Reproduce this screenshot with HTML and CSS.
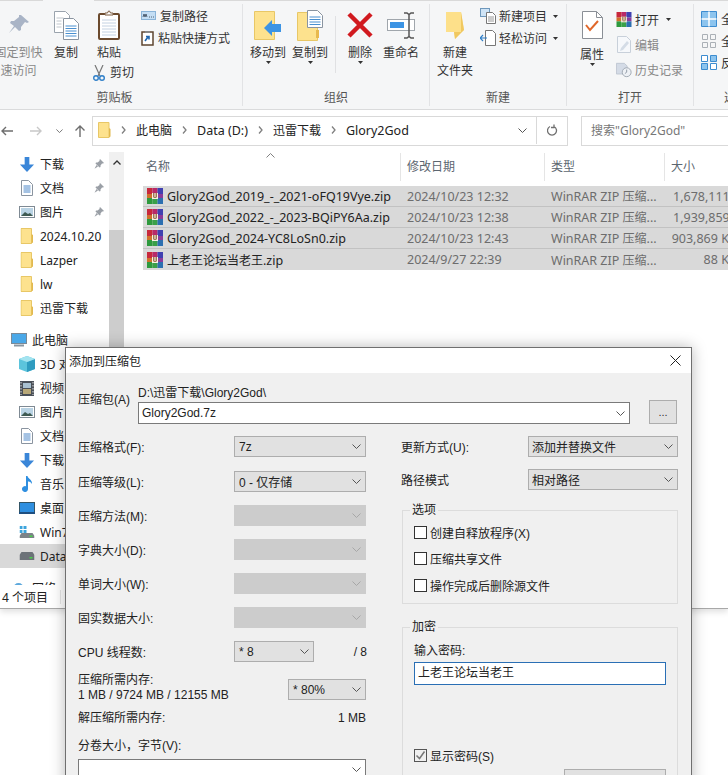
FILE: index.html
```html
<!DOCTYPE html>
<html lang="zh-CN">
<head>
  <meta charset="UTF-8" />
  <title>添加到压缩包</title>
  <link rel="stylesheet" href="styles.css">
</head>
<body>

  <svg class="icon-defs" xmlns="http://www.w3.org/2000/svg">
    <symbol id="rar" viewBox="0 0 16 16">
      <rect x="0" y="0" width="5.500" height="6" fill="#c8283c"/><rect x="5.500" y="0" width="5" height="6" fill="#b82a68"/><rect x="10.500" y="0" width="5.500" height="6" fill="#4040b0"/>
      <rect x="0" y="6" width="5.500" height="4" fill="#d0702a"/><rect x="10.500" y="6" width="5.500" height="4" fill="#8a3a9a"/>
      <rect x="0" y="10" width="5.500" height="6" fill="#2e9a3e"/><rect x="5.500" y="10" width="5" height="6" fill="#3aa048"/><rect x="10.500" y="10" width="5.500" height="6" fill="#2c6fb0"/>
      <rect x="5" y="5" width="6" height="6" fill="#f6f1e4"/><path d="M6.500 5v4M8 5v4M9.500 5v4M6.500 9.500h3" fill="none" stroke="#8a5a30" stroke-width=".8"/>
    </symbol>
    <symbol id="folder" viewBox="0 0 13 16">
      <path d="M.5.500h10.500v15H.5z" fill="#fde28e" stroke="#e8c766"/><path d="M11 6l1.500 1v7.500l-1.500 1z" fill="#e2b94f"/>
    </symbol>
    <symbol id="down" viewBox="0 0 16 16">
      <path d="M5.500 0h5v8h5L8 16 .5 8h5z" fill="#3a86d8"/>
    </symbol>
    <symbol id="doc" viewBox="0 0 12 16">
      <path d="M.5.500h7l4 4v11H.5z" fill="#fff" stroke="#8a94a0"/><path d="M2.500 6h7M2.500 8h7M2.500 10h7M2.500 12h7" stroke="#4a86c8"/>
    </symbol>
    <symbol id="pic" viewBox="0 0 16 12">
      <rect x=".5" y=".5" width="15" height="11" fill="#fff" stroke="#7f8a94"/><rect x="2" y="2" width="12" height="8" fill="#b9d3e4"/><path d="M2 10l4-4 3 2 2-1 3 3z" fill="#3f5a52"/>
    </symbol>
    <symbol id="pin" viewBox="0 0 10 10">
      <path d="M6 0l4 4-1 .5-1 0-1.500 2 0 1.500-1 .5-4-4 .5-1 1.500 0 2-1.500 0-1zM2.500 6l1.500 1.500L.5 9.800z" fill="#9a9fa6"/>
    </symbol>
    <symbol id="chev" viewBox="0 0 9 5">
      <path d="M.5.500L4.500 4.500 8.500.500" fill="none" stroke="#555" stroke-width="1"/>
    </symbol>
    <symbol id="crumb" viewBox="0 0 5 8">
      <path d="M1 .5L4 4 1 7.500" fill="none" stroke="#808080" stroke-width="1.300"/>
    </symbol>
  </svg>

  <div class="explorer">
    <div class="tabline"><span class="tabgap"></span></div>

    <div class="ribbon">
      <section class="group group-clip">
        <div class="tools">
          <div class="big big-pin">
            <div class="big-icon"><svg width="22" height="20" viewBox="0 0 22 20"><path d="M13 0l8 7-2 1-2-1-4 5 0 3-2 1-4-4-6 6 5-7-4-3 1-2 3 0 5-4 0-2z" fill="#a9b4c6"/></svg></div>
            <span class="muted">固定到快<br>速访问</span>
          </div>
          <div class="big big-copy">
            <div class="big-icon"><svg width="25" height="29" viewBox="0 0 25 29"><path d="M.5.500h11l4 4v17H.5z" fill="#fff" stroke="#9aa3ad"/><path d="M9.500 7.500h10l5 5v16h-15z" fill="#fff" stroke="#8a94a0"/><path d="M11.500 15h11M11.500 17.500h11M11.500 20h11M11.500 22.500h11M11.500 25h11" stroke="#4a90d0"/><path d="M2.500 7h7M2.500 10h5M2.500 13h5M2.500 16h5" stroke="#c0c6cc"/></svg></div>
            <span>复制</span>
          </div>
          <div class="paste">
            <div class="big-icon"><svg width="22" height="30" viewBox="0 0 22 30"><rect x="1" y="4" width="20" height="25" rx="1" fill="#fff" stroke="#6b4a2e" stroke-width="2"/><path d="M7 5V3h2.500l1-2h1l1 2H15v2z" fill="#fff" stroke="#7a5a3e"/><path d="M4 10h14M4 13h14M4 16h14M4 19h14M4 22h14M4 25h14" stroke="#c4d2e2"/></svg></div>
            <span>粘贴</span>
            <div class="cut">
              <svg width="12" height="16" viewBox="0 0 12 16"><path d="M2 0l5 11M10 0L5 11" stroke="#777" stroke-width="1.200" fill="none"/><circle cx="3" cy="13" r="2.300" fill="none" stroke="#2f7fc8" stroke-width="1.400"/><circle cx="9" cy="13" r="2.300" fill="none" stroke="#2f7fc8" stroke-width="1.400"/></svg>
              <span>剪切</span>
            </div>
          </div>
          <div class="smalls">
            <div class="small"><svg width="15" height="10" viewBox="0 0 15 10"><rect x=".5" y=".5" width="14" height="8" fill="#c4def4" stroke="#8ab4d8"/><path d="M2 6l1-3 1 3 1-3 1 3M8 6h1M10 6h1M12 6h1" stroke="#345" fill="none" stroke-width=".8"/></svg><span>复制路径</span></div>
            <div class="small"><svg width="13" height="16" viewBox="0 0 13 16"><rect x="1" y="2" width="11" height="13" fill="#fff" stroke="#5e4630" stroke-width="1.500"/><rect x="4" y="1" width="5" height="2" fill="#888"/><path d="M4 11l3-4M5 6.500h3v3" stroke="#1f66b0" stroke-width="1.600" fill="none"/></svg><span>粘贴快捷方式</span></div>
          </div>
        </div>
        <div class="group-name">剪贴板</div>
      </section>

      <section class="group group-org">
        <div class="tools">
          <div class="big big-move">
            <div class="big-icon"><svg width="28" height="29" viewBox="0 0 28 29"><path d="M.5.500h20v28H.5z" fill="#fde28e" stroke="#e8c766"/><path d="M10 20l8-8v4h9v8h-9v4z" transform="translate(0 -3)" fill="#3c94e4"/></svg></div>
            <span>移动到</span><svg class="caret" width="5" height="3" viewBox="0 0 5 3"><path d="M0 0h5L2.500 3z"/></svg>
          </div>
          <div class="big big-move">
            <div class="big-icon"><svg width="27" height="31" viewBox="0 0 27 31"><path d="M.5 2.500h20v28H.5z" fill="#fde28e" stroke="#e8c766"/><path d="M19 28V20h3v8z" fill="#e8b94e"/><path d="M10.500.500h10l5 5v12h-15z" fill="#fff" stroke="#8a94a0"/><path d="M12.500 7h11M12.500 9.500h11M12.500 12h11M12.500 14.500h11" stroke="#4a90d0"/></svg></div>
            <span>复制到</span><svg class="caret" width="5" height="3" viewBox="0 0 5 3"><path d="M0 0h5L2.500 3z"/></svg>
          </div>
          <i class="tool-sep"></i>
          <div class="big big-del">
            <div class="big-icon"><svg width="26" height="26" viewBox="0 0 26 26"><path d="M2 2l22 22M24 2L2 24" stroke="#d11a1f" stroke-width="4.500"/></svg></div>
            <span>删除</span><svg class="caret" width="5" height="3" viewBox="0 0 5 3"><path d="M0 0h5L2.500 3z"/></svg>
          </div>
          <div class="big big-ren">
            <div class="big-icon"><svg width="29" height="27" viewBox="0 0 29 27"><rect x=".5" y="7.500" width="27" height="11" fill="#fff" stroke="#a0a6ac"/><rect x="3" y="10" width="14" height="6" fill="#3c94e4"/><path d="M17 1h3l2 1.500L24 1h3M22 2.500v22M17 26h3l2-1.500L24 26h3" fill="none" stroke="#555" stroke-width="1.500"/></svg></div>
            <span>重命名</span>
          </div>
        </div>
        <div class="group-name">组织</div>
      </section>

      <section class="group group-new">
        <div class="tools">
          <div class="big big-nf">
            <div class="big-icon"><svg width="20" height="28" viewBox="0 0 20 28"><path d="M1 1h15l3 18-3 2-6 7-1-7H1z" fill="#fde08a"/><path d="M16 1l3 18-9 9-1-7h7z" fill="#f0c860"/></svg></div>
            <span>新建<br>文件夹</span>
          </div>
          <div class="smalls">
            <div class="small"><svg width="17" height="16" viewBox="0 0 17 16"><rect x=".5" y=".5" width="9" height="8" fill="#cfe4f6" stroke="#6e98bc"/><path d="M6.500 4.500h6l3 3v8h-9z" fill="#fff" stroke="#777"/><path d="M8 9h6M8 11h6M8 13h6" stroke="#999"/></svg><span>新建项目</span><svg class="caret" width="5" height="3" viewBox="0 0 5 3"><path d="M0 0h5L2.500 3z"/></svg></div>
            <div class="small"><svg width="17" height="16" viewBox="0 0 17 16"><path d="M5.500.500h7l3 3v12h-10z" fill="#fff" stroke="#777"/><path d="M0 8h7M3 5L0 8l3 3" fill="none" stroke="#2f7fc8" stroke-width="1.200"/></svg><span>轻松访问</span><svg class="caret" width="5" height="3" viewBox="0 0 5 3"><path d="M0 0h5L2.500 3z"/></svg></div>
          </div>
        </div>
        <div class="group-name">新建</div>
      </section>

      <section class="group group-open">
        <div class="tools">
          <div class="big big-prop">
            <div class="big-icon"><svg width="21" height="28" viewBox="0 0 21 28"><path d="M.5.500h14l6 6v21H.5z" fill="#fff" stroke="#8a8f96"/><path d="M14.500.500v6h6" fill="none" stroke="#8a8f96"/><path d="M4 14l4 5 8-9" fill="none" stroke="#e0672a" stroke-width="2"/></svg></div>
            <span>属性</span><svg class="caret" width="5" height="3" viewBox="0 0 5 3"><path d="M0 0h5L2.500 3z"/></svg>
          </div>
          <div class="smalls smalls-open">
            <div class="small"><svg width="16" height="15"><use href="#rar"/></svg><span>打开</span><svg class="caret" width="5" height="3" viewBox="0 0 5 3"><path d="M0 0h5L2.500 3z"/></svg></div>
            <div class="small muted"><svg width="16" height="17" viewBox="0 0 14 17"><path d="M.5.500h9l4 4v12H.5z" fill="#f6f8fb" stroke="#c8d0da"/><path d="M4 12l6-7 2 2-6 7-3 1z" fill="#d4dce6"/></svg><span>编辑</span></div>
            <div class="small muted"><svg width="16" height="16" viewBox="0 0 18 16"><path d="M.5.500h9l3 3v9H.5z" fill="#d4dbe6" stroke="#bcc4d0"/><circle cx="12" cy="10.500" r="5" fill="#eef1f5" stroke="#9aa3ad"/><path d="M12 7.500v3l-2 1.500" fill="none" stroke="#8a94a0"/></svg><span>历史记录</span></div>
          </div>
        </div>
        <div class="group-name">打开</div>
      </section>

      <section class="group group-sel">
        <div class="tools">
          <div class="smalls smalls-sel">
            <div class="small"><svg width="16" height="16" viewBox="0 0 16 16"><path d="M.5.500h15v15H.5z" fill="#8cc4ee" stroke="#3c8cd0"/><path d="M8 .5v15M.5 8h15" stroke="#fff" stroke-width="1.500"/></svg><span>全部选择</span></div>
            <div class="small"><svg width="16" height="14" viewBox="0 0 14 14"><path d="M.5.500h5v5h-5zM8.500.500h5v5h-5zM.5 8.500h5v5h-5zM8.500 8.500h5v5h-5z" fill="none" stroke="#aab0b6"/></svg><span>全部取消</span></div>
            <div class="small"><svg width="16" height="16" viewBox="0 0 16 16"><path d="M.5 8.500h6v6h-6zM9.500.500h6v6h-6z" fill="#8cc4ee" stroke="#3c8cd0"/><path d="M.5.500h6v6h-6zM9.500 8.500h6v6h-6z" fill="#fff" stroke="#3c8cd0"/></svg><span>反向选择</span></div>
          </div>
        </div>
        <div class="group-name">选择</div>
      </section>
    </div>

    <div class="nav">
      <svg class="nav-back" width="12" height="10" viewBox="0 0 12 10"><path d="M12 5H1M5 1L1 5l4 4" fill="none" stroke="#6e6e6e" stroke-width="1.400"/></svg>
      <svg class="nav-fwd" width="12" height="10" viewBox="0 0 12 10"><path d="M0 5h11M7 1l4 4-4 4" fill="none" stroke="#c8c8c8" stroke-width="1.400"/></svg>
      <svg class="nav-more" width="7" height="4"><use href="#chev"/></svg>
      <svg class="nav-up" width="12" height="12" viewBox="0 0 12 12"><path d="M6 12V1M1.500 5.500L6 1l4.500 4.500" fill="none" stroke="#6e6e6e" stroke-width="1.400"/></svg>
      <div class="address">
        <svg width="13" height="16"><use href="#folder"/></svg>
        <svg class="crumb" width="5" height="8"><use href="#crumb"/></svg><span class="cn">此电脑</span>
        <svg class="crumb" width="5" height="8"><use href="#crumb"/></svg><span>Data (D:)</span>
        <svg class="crumb" width="5" height="8"><use href="#crumb"/></svg><span class="cn">迅雷下载</span>
        <svg class="crumb" width="5" height="8"><use href="#crumb"/></svg><span>Glory2God</span>
        <svg class="addr-chev" width="9" height="5"><use href="#chev"/></svg>
        <div class="refresh"><svg width="11" height="12" viewBox="0 0 11 12"><path d="M3 2.500a4.500 4.500 0 1 0 4 0M7 .5v3h-3" fill="none" stroke="#707070" stroke-width="1.300"/></svg></div>
      </div>
      <div class="search">搜索"Glory2God"</div>
    </div>

    <div class="main">
      <aside class="sidebar">
        <div class="side-item"><svg width="15" height="15"><use href="#down"/></svg><span>下载</span><svg class="side-pin" width="10" height="10"><use href="#pin"/></svg></div>
        <div class="side-item"><svg width="12" height="16"><use href="#doc"/></svg><span>文档</span><svg class="side-pin" width="10" height="10"><use href="#pin"/></svg></div>
        <div class="side-item"><svg width="16" height="12"><use href="#pic"/></svg><span>图片</span><svg class="side-pin" width="10" height="10"><use href="#pin"/></svg></div>
        <div class="side-item"><svg width="13" height="16"><use href="#folder"/></svg><span>2024.10.20</span></div>
        <div class="side-item"><svg width="13" height="16"><use href="#folder"/></svg><span>Lazper</span></div>
        <div class="side-item"><svg width="13" height="16"><use href="#folder"/></svg><span>lw</span></div>
        <div class="side-item"><svg width="13" height="16"><use href="#folder"/></svg><span>迅雷下载</span></div>
        <div class="side-item side-pc"><svg width="16" height="14" viewBox="0 0 16 14"><rect x=".5" y=".5" width="15" height="10" fill="#4aa8e8" stroke="#7a8a98"/><path d="M3 12.500h10" stroke="#8a96a0" stroke-width="2"/></svg><span>此电脑</span></div>
        <div class="side-item"><svg width="16" height="16" viewBox="0 0 16 16"><path d="M8 0l8 3v10l-8 3-8-3V3z" fill="#5cc4dc"/><path d="M8 6l8-3v10l-8 3z" fill="#2f9cc0"/><path d="M8 6L0 3l8-3 8 3z" fill="#a4e4f0"/></svg><span>3D 对象</span></div>
        <div class="side-item"><svg width="14" height="15" viewBox="0 0 14 15"><rect width="14" height="15" fill="#4a5058"/><rect x="3" y="2" width="8" height="5" fill="#a8c0d0"/><rect x="3" y="8" width="8" height="5" fill="#b8a878"/><path d="M1 1v13M13 1v13" stroke="#ddd" stroke-dasharray="1.500 1.500"/></svg><span>视频</span></div>
        <div class="side-item"><svg width="16" height="12"><use href="#pic"/></svg><span>图片</span></div>
        <div class="side-item"><svg width="12" height="16"><use href="#doc"/></svg><span>文档</span></div>
        <div class="side-item"><svg width="15" height="15"><use href="#down"/></svg><span>下载</span></div>
        <div class="side-item"><svg width="12" height="16" viewBox="0 0 12 16"><path d="M5 0h1.500c.5 3 5 3.500 4.500 8-1-2-3-2.500-4-2.500V13a3 3 0 1 1-2-2.800z" fill="#2f8fe0"/></svg><span>音乐</span></div>
        <div class="side-item"><svg width="16" height="12" viewBox="0 0 16 12"><rect x=".5" y=".5" width="15" height="11" fill="#2f8fe0" stroke="#356"/><rect y="10" width="16" height="2" fill="#1f4f80"/></svg><span>桌面</span></div>
        <div class="side-item"><svg width="15" height="12" viewBox="0 0 15 12"><path d="M0 0h3v3H0zM4 0h3v3H4zM0 4h3v3H0zM4 4h3v3H4z" fill="#3ca4dc"/><path d="M2 7h11l2 3v2H0v-2z" fill="#7c8288"/><rect x="10" y="9.500" width="3" height="1.500" fill="#4ad04a"/></svg><span>Win7</span></div>
        <div class="side-item side-sel"><svg width="15" height="8" viewBox="0 0 15 8"><path d="M2 0h11l2 3v5H0V3z" fill="#6c7278"/><rect x="10" y="5" width="3" height="1.500" fill="#4ad04a"/></svg><span>Data (D:)</span></div>
        <div class="side-item side-net"><svg width="15" height="12" viewBox="0 0 15 12"><circle cx="7" cy="6" r="5" fill="#5ca8dc"/></svg><span>网络</span></div>
      </aside>
      <div class="scrollbar">
        <div class="scroll-up"><svg width="8" height="5" viewBox="0 0 8 5"><path d="M.5 4.500L4 1l3.500 3.500" fill="none" stroke="#333" stroke-width="1.300"/></svg></div>
        <div class="scroll-thumb"></div>
      </div>
      <div class="files">
        <div class="file-head">
          <div class="col-name">名称<svg class="sort" width="9" height="5" viewBox="0 0 9 5"><path d="M.5 4.500l4-4 4 4" fill="none" stroke="#808080"/></svg></div>
          <div>修改日期</div>
          <div>类型</div>
          <div>大小</div>
        </div>
        <div class="file-row">
          <div class="file-name"><svg width="16" height="16"><use href="#rar"/></svg>Glory2God_2019_-_2021-oFQ19Vye.zip</div>
          <div>2024/10/23 12:32</div><div>WinRAR ZIP <span class="cn">压缩</span>...</div><div class="file-size size-big">1,678,111 KB</div>
        </div>
        <div class="file-row">
          <div class="file-name"><svg width="16" height="16"><use href="#rar"/></svg>Glory2God_2022_-_2023-BQiPY6Aa.zip</div>
          <div>2024/10/23 12:38</div><div>WinRAR ZIP <span class="cn">压缩</span>...</div><div class="file-size size-big">1,939,859 KB</div>
        </div>
        <div class="file-row">
          <div class="file-name"><svg width="16" height="16"><use href="#rar"/></svg>Glory2God_2024-YC8LoSn0.zip</div>
          <div>2024/10/23 12:43</div><div>WinRAR ZIP <span class="cn">压缩</span>...</div><div class="file-size">903,869 KB</div>
        </div>
        <div class="file-row">
          <div class="file-name"><svg width="16" height="16"><use href="#rar"/></svg><span><span class="cn">上老王论坛当老王</span>.zip</span></div>
          <div>2024/9/27 22:39</div><div>WinRAR ZIP <span class="cn">压缩</span>...</div><div class="file-size">88 KB</div>
        </div>
      </div>
    </div>

    <div class="status"><span>4 个项目</span><i></i></div>
  </div>

  <!-- dialog window floats over the explorer -->
  <div class="dialog">
    <div class="dlg-title">
      <span>添加到压缩包</span>
      <svg width="11" height="11" viewBox="0 0 11 11"><path d="M.5.500l10 10M10.500.500l-10 10" stroke="#222"/></svg>
    </div>
    <div class="dlg-body">
      <div class="archive">
        <label class="archive-label">压缩包(A)</label>
        <div class="archive-field">
          <div class="archive-path">D:\迅雷下载\Glory2God\</div>
          <div class="combo combo-edit combo-archive">Glory2God.7z<svg width="9" height="5"><use href="#chev"/></svg></div>
        </div>
        <button class="browse">...</button>
      </div>

      <div class="columns">
        <div class="col-left">
          <div class="row row-first"><span>压缩格式(F):</span><div class="combo">7z<svg width="9" height="5"><use href="#chev"/></svg></div></div>
          <div class="row"><span>压缩等级(L):</span><div class="combo">0 - 仅存储<svg width="9" height="5"><use href="#chev"/></svg></div></div>
          <div class="row"><span>压缩方法(M):</span><div class="combo combo-off"><svg width="9" height="5"><use href="#chev"/></svg></div></div>
          <div class="row"><span>字典大小(D):</span><div class="combo combo-off"><svg width="9" height="5"><use href="#chev"/></svg></div></div>
          <div class="row"><span>单词大小(W):</span><div class="combo combo-off"><svg width="9" height="5"><use href="#chev"/></svg></div></div>
          <div class="row"><span>固实数据大小:</span><div class="combo combo-off"><svg width="9" height="5"><use href="#chev"/></svg></div></div>
          <div class="row">
            <span>CPU 线程数:</span>
            <div class="cpu"><div class="combo combo-cpu">* 8<svg width="9" height="5"><use href="#chev"/></svg></div><span class="cpu-max">/ 8</span></div>
          </div>
          <div class="row-mem">
            <div class="mem-text"><div>压缩所需内存:</div><div>1 MB / 9724 MB / 12155 MB</div></div>
            <div class="combo combo-mem">* 80%<svg width="9" height="5"><use href="#chev"/></svg></div>
          </div>
          <div class="row-text"><span>解压缩所需内存:</span><span>1 MB</span></div>
          <div class="row-text row-vol">分卷大小，字节(V):</div>
          <div class="combo combo-edit combo-vol"><svg width="9" height="5"><use href="#chev"/></svg></div>
        </div>

        <div class="col-right">
          <div class="row row-right"><span>更新方式(U):</span><div class="combo combo-wide">添加并替换文件<svg width="9" height="5"><use href="#chev"/></svg></div></div>
          <div class="row row-right"><span>路径模式</span><div class="combo combo-wide">相对路径<svg width="9" height="5"><use href="#chev"/></svg></div></div>
          <fieldset class="box box-opts">
            <legend>选项</legend>
            <div class="check-row"><i class="check"></i>创建自释放程序(X)</div>
            <div class="check-row"><i class="check"></i>压缩共享文件</div>
            <div class="check-row"><i class="check"></i>操作完成后删除源文件</div>
          </fieldset>
          <fieldset class="box box-pass">
            <legend>加密</legend>
            <div class="pass-label">输入密码:</div>
            <div class="pass-input">上老王论坛当老王</div>
            <div class="check-row check-show">
              <i class="check check-on"><svg width="11" height="11" viewBox="0 0 11 11"><path d="M1.500 5.500l3 3 5-7" fill="none" stroke="#777" stroke-width="1.500"/></svg></i>显示密码(S)
            </div>
            <div class="pass-actions"><button class="pass-btn"></button></div>
          </fieldset>
        </div>
      </div>
    </div>
  </div>

</body>
</html>
```

FILE: styles.css
```css
* {
  box-sizing: border-box;
}

html, body {
  height: 775px;
  overflow: hidden;
}

body {
  margin: 0;
  position: relative;
  background: #fff;
  color: #222;
  font-family: "Noto Sans", "Noto Sans CJK SC", sans-serif;
  font-size: 12px;
}

.icon-defs {
  display: none;
}

svg {
  flex: none;
  display: block;
}

.cn {
  font-size: 12px;
}

/* explorer window */
.explorer {
  height: 609px;
  border-bottom: 1px solid #a8a8a8;
  box-shadow: 0 3px 6px rgba(0, 0, 0, 0.12);
  overflow: hidden;
}

.tabline {
  height: 4px;
  background: #f5f6f7;
  border-top: 1px solid #d9d9d9;
}

.tabgap {
  display: block;
  width: 51px;
  height: 3px;
  margin: -1px 0 0 43px;
  background: #f5f6f7;
}

.ribbon {
  display: flex;
  height: 106px;
  background: #f5f6f7;
  border-bottom: 1px solid #dadbdc;
  color: #333;
}

.group {
  flex: none;
  position: relative;
  display: flex;
  flex-direction: column;
  border-right: 1px solid #e2e3e5;
  margin-bottom: 3px;
}

.group-clip { width: 250px; margin-left: -7px; }
.group-org { width: 187px; }
.group-new { width: 137px; }
.group-open { width: 127px; }
.group-sel { width: 84px; border-right: none; }

.tools {
  flex: 1;
  display: flex;
  padding-top: 1px;
}

.group-name {
  height: 18px;
  line-height: 16px;
  margin-bottom: -2px;
  text-align: center;
  color: #555;
}

.group-clip .group-name {
  padding-right: 6px;
}

.big {
  display: flex;
  flex-direction: column;
  align-items: center;
  text-align: center;
  line-height: 18px;
}

.big-icon {
  height: 40px;
  display: flex;
  align-items: center;
  justify-content: center;
  margin-bottom: -1px;
}

.caret {
  margin-top: -1px;
  fill: #333;
}

.muted {
  color: #888;
}

.big-pin { width: 51px; }
.big-copy { width: 44px; }
.big-move { width: 42px; }
.big-del { width: 38px; margin-left: 5px; }
.big-ren { width: 44px; }
.big-nf { width: 50px; }
.big-prop { width: 30px; margin-left: 10px; }

.big-prop .big-icon {
  margin-bottom: 1px;
}

.group-org .tools { padding-left: 4px; }

.tool-sep {
  width: 1px;
  height: 57px;
  margin: 11px 0 0 4px;
  background: #e0e1e3;
}

.paste {
  width: 42px;
  display: flex;
  flex-direction: column;
  align-items: center;
  line-height: 18px;
}

.cut {
  display: flex;
  align-items: center;
  gap: 5px;
  height: 20px;
  margin-top: 1px;
  white-space: nowrap;
  align-self: flex-start;
  margin-left: 5px;
}

.smalls {
  display: flex;
  flex-direction: column;
  margin-left: 11px;
}

.small {
  display: flex;
  align-items: center;
  gap: 4px;
  height: 22px;
  white-space: nowrap;
}

.small .caret {
  margin: 0 0 0 4px;
}

.group-new .smalls { margin-left: 0; }
.group-new .small { gap: 2px; }

.smalls-open {
  margin-left: 9px;
  padding-top: 2px;
}

.smalls-open .small {
  height: 25px;
  gap: 3px;
}

.smalls-sel {
  margin-left: 7px;
  margin-top: 3px;
}

/* address row */
.nav {
  display: flex;
  align-items: center;
  height: 42px;
  background: #fff;
  padding-bottom: 1px;
}

.nav-back { margin-left: 1px; }
.nav-fwd { margin-left: 17px; }
.nav-more { margin-left: 14px; }
.nav-up { margin-left: 11px; }

.address {
  display: flex;
  flex: none;
  align-items: center;
  width: 476px;
  height: 30px;
  margin-left: 6px;
  padding: 0 0 1px 5px;
  border: 1px solid #d9d9d9;
  font-size: 12.500px;
  white-space: nowrap;
}

.crumb {
  margin: 0 10px;
}

.addr-chev {
  margin-left: auto;
  margin-right: 9px;
}

.refresh {
  display: flex;
  align-items: center;
  justify-content: center;
  width: 31px;
  height: 100%;
  border-left: 1px solid #d9d9d9;
}

.search {
  flex: none;
  width: 160px;
  height: 30px;
  margin-left: 13px;
  padding-left: 9px;
  border: 1px solid #d9d9d9;
  line-height: 28px;
  color: #777;
}

/* main area */
.main {
  display: flex;
  height: 433px;
  background: #fff;
}

.sidebar {
  width: 109px;
  flex: none;
  overflow: hidden;
}

.side-item {
  position: relative;
  display: flex;
  align-items: center;
  height: 24px;
  padding-left: 40px;
  white-space: nowrap;
}

.side-item > svg:first-child {
  position: absolute;
  left: 27px;
  transform: translateX(-50%);
}

.side-pin {
  position: absolute;
  left: 94px;
}

.side-pc {
  margin-top: 8px;
  padding-left: 32px;
}

.side-pc > svg:first-child {
  left: 19px;
}

.side-sel {
  background: #d9d9d9;
}

.side-net {
  margin-top: 8px;
  padding-left: 32px;
}

.side-net > svg:first-child {
  left: 19px;
}

.scrollbar {
  width: 15px;
  flex: none;
  background: #f0f0f0;
}

.scroll-up {
  display: flex;
  align-items: center;
  justify-content: center;
  height: 20px;
}

.scroll-thumb {
  height: 355px;
  margin-top: 58px;
  background: #cdcdcd;
}

.files {
  margin-left: 19px;
  width: 620px;
  flex: none;
}

.file-head,
.file-row {
  display: grid;
  grid-template-columns: 257px 144px 120px 73px;
}

.file-head {
  position: relative;
  height: 27px;
  margin-top: 1px;
  margin-bottom: 6px;
  color: #5c6670;
  line-height: 28px;
}

.file-head > div {
  padding-left: 6px;
  border-left: 1px solid #e5e5e5;
}

.file-head > .col-name {
  padding-left: 3px;
  border-left: none;
}

.sort {
  position: absolute;
  left: 123px;
  top: 0;
}

.file-row {
  height: 21px;
  align-items: center;
  background: #d9d9d9;
  border-bottom: 1px solid #c2c2c2;
  color: #6d6d6d;
  font-size: 12.500px;
  white-space: nowrap;
}

.file-row:last-child {
  border-bottom: none;
}

.file-row > div {
  padding-left: 7px;
}

.file-row > .file-name {
  display: flex;
  align-items: center;
  gap: 4px;
  padding-left: 4px;
  color: #222;
}

.file-row > .file-size {
  padding-left: 0;
  text-align: right;
}

.file-row > .size-big {
  padding-left: 9px;
  text-align: left;
}

.status {
  display: flex;
  align-items: center;
  height: 24px;
  padding-left: 2px;
  background: #fff;
}

.status i {
  width: 1px;
  height: 14px;
  margin-left: 12px;
  background: #e5e5e5;
}

/* dialog */
.dialog {
  position: absolute;
  left: 65px;
  top: 347px;
  width: 627px;
  height: 500px;
  border: 1px solid #6f6f6f;
  background: #f0f0f0;
  box-shadow: 0 0 14px rgba(0, 0, 0, 0.28);
  font-family: "Liberation Sans", "Noto Sans CJK SC", sans-serif;
  color: #222;
}

.dlg-title {
  display: flex;
  align-items: center;
  justify-content: space-between;
  height: 25px;
  padding: 0 10px 0 3px;
  background: #fff;
}

.dlg-body {
  padding: 12px 12px 0;
}

.archive {
  display: flex;
}

.archive-label {
  width: 60px;
  flex: none;
  line-height: 30px;
}

.archive-field {
  width: 492px;
  flex: none;
}

.archive-path {
  height: 17px;
  line-height: 16px;
}

.combo {
  display: flex;
  align-items: center;
  justify-content: space-between;
  width: 132px;
  height: 21px;
  padding: 0 4px;
  background: #e1e1e1;
  border: 1px solid #adadad;
}

.combo-edit {
  background: #fff;
  border-color: #7a7a7a;
}

.combo-archive {
  width: 492px;
  height: 22px;
  padding: 0 4px 0 3px;
}

.combo-off {
  background: #cccccc;
  border-color: #cccccc;
  justify-content: flex-end;
}

.combo-off svg {
  opacity: 0.3;
}

.browse {
  width: 28px;
  height: 24px;
  margin: 15px 0 0 19px;
  padding: 0;
  background: #e1e1e1;
  border: 1px solid #adadad;
  color: #333;
  font: 11px "Liberation Sans", sans-serif;
}

.columns {
  display: flex;
  margin-top: 12px;
}

.col-left {
  width: 288px;
  flex: none;
}

.col-right {
  width: 277px;
  flex: none;
  margin-left: 35px;
}

.row {
  display: flex;
  align-items: center;
  justify-content: space-between;
  height: 21px;
  margin-bottom: 13px;
}

.row-first {
  margin-bottom: 14px;
}

.row-right {
  margin-bottom: 12px;
}

.combo-wide {
  width: 150px;
  padding-left: 3px;
}

.cpu {
  display: flex;
  align-items: center;
  width: 132px;
}

.combo-cpu {
  width: 80px;
}

.cpu-max {
  margin-left: auto;
  margin-right: -1px;
}

.row-mem {
  display: flex;
  justify-content: space-between;
  margin-top: -2px;
}

.mem-text {
  line-height: 15px;
}

.combo-mem {
  width: 78px;
  margin-top: 6px;
}

.row-text {
  display: flex;
  justify-content: space-between;
  height: 16px;
  line-height: 16px;
  margin-top: 7px;
}

.row-vol {
  margin-top: 12px;
}

.combo-vol {
  width: 288px;
  height: 30px;
  margin-top: 5px;
  align-items: flex-start;
  padding-top: 7px;
  justify-content: flex-end;
}

.box {
  margin: 0 0 0 1px;
  padding: 5px 11px 10px;
  border: 1px solid #dcdcdc;
  min-width: 0;
}

.box legend {
  margin-left: -4px;
  padding: 0 2px;
  line-height: 17px;
  font-size: 12px;
}

.box-pass {
  margin-top: 15px;
  padding-top: 7px;
}

.check-row {
  display: flex;
  align-items: center;
  gap: 3px;
  height: 16px;
  margin-bottom: 10.500px;
}

.check-row:last-child {
  margin-bottom: 0;
}

.check {
  flex: none;
  width: 13px;
  height: 13px;
  background: #fff;
  border: 1px solid #333;
}

.check-on {
  background: #f0f0f0;
  border-color: #555;
}

.pass-label {
  height: 16px;
  line-height: 16px;
}

.pass-input {
  height: 23px;
  margin-top: 3px;
  padding-left: 3px;
  background: #fff;
  border: 1px solid #2a6fb5;
  line-height: 21px;
}

.check-show {
  margin: 62px 0 0;
}

.pass-actions {
  display: flex;
  justify-content: flex-end;
  margin-top: 6px;
}

.pass-btn {
  width: 102px;
  height: 24px;
  background: #e1e1e1;
  border: 1px solid #adadad;
}
```
